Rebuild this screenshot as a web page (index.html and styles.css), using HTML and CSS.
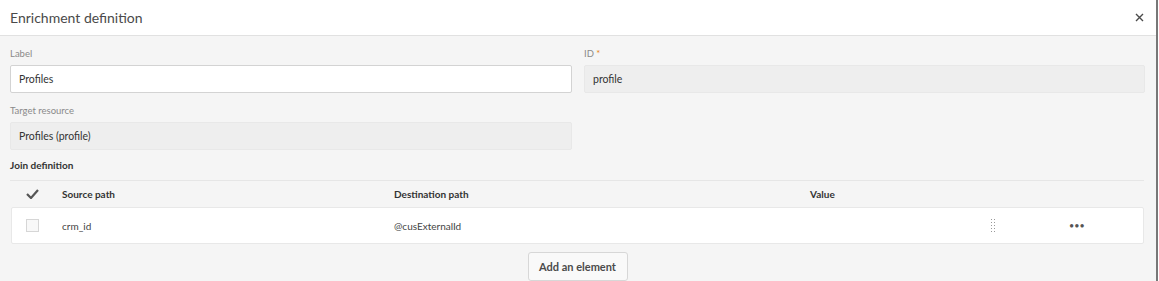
FILE: index.html
```html
<!DOCTYPE html>
<html lang="en">
<head>
  <meta charset="UTF-8" />
  <title>Enrichment definition</title>
  <link rel="stylesheet" href="styles.css">
</head>
<body>
  <div class="dialog">
    <header>
      <h1>Enrichment definition</h1>
      <svg class="close" width="9" height="9" viewBox="0 0 9 9"><path d="M1 1 L8 8 M8 1 L1 8" stroke="#4b4b4b" stroke-width="1.4"/></svg>
    </header>

    <div class="content">
      <div class="fields">
        <div class="field">
          <label>Label</label>
          <div class="input">Profiles</div>
        </div>
        <div class="field">
          <label>ID <span class="req">*</span></label>
          <div class="input readonly">profile</div>
        </div>
        <div class="field">
          <label>Target resource</label>
          <div class="input readonly">Profiles (profile)</div>
        </div>
      </div>

      <h3>Join definition</h3>

      <div class="table">
        <div class="thead">
          <div class="cell check">
            <svg width="13" height="10" viewBox="0 0 13 10"><path d="M1 5 L5 9 L12 1" fill="none" stroke="#555" stroke-width="2.2"/></svg>
          </div>
          <div class="cell">Source path</div>
          <div class="cell">Destination path</div>
          <div class="cell">Value</div>
        </div>
        <div class="row">
          <div class="cell check"><span class="box"></span></div>
          <div class="cell">crm_id</div>
          <div class="cell">@cusExternalId</div>
          <div class="cell"></div>
          <div class="cell handle">
            <svg width="6" height="14" viewBox="0 0 6 14">
              <g fill="#999">
                <rect x="0" y="0" width="1" height="1"/><rect x="3" y="0" width="1" height="1"/>
                <rect x="0" y="3" width="1" height="1"/><rect x="3" y="3" width="1" height="1"/>
                <rect x="0" y="6" width="1" height="1"/><rect x="3" y="6" width="1" height="1"/>
                <rect x="0" y="9" width="1" height="1"/><rect x="3" y="9" width="1" height="1"/>
                <rect x="0" y="12" width="1" height="1"/><rect x="3" y="12" width="1" height="1"/>
              </g>
            </svg>
          </div>
          <div class="cell more">&bull;&bull;&bull;</div>
        </div>
      </div>

      <div class="actions">
        <button>Add an element</button>
      </div>
    </div>
  </div>
</body>
</html>
```

FILE: styles.css
```css
* {
  box-sizing: border-box;
}

body {
  margin: 0;
  font-family: Lato, sans-serif;
  background-color: #fff;
  color: #4b4b4b;
}

.dialog {
  width: 1158px;
  height: 281px;
  border-right: 2px solid #777;
  overflow: hidden;
  background-color: #f5f5f5;
}

header {
  display: flex;
  align-items: center;
  justify-content: space-between;
  height: 36px;
  padding: 0 12px 0 10px;
  background-color: #fff;
  border-bottom: 1px solid #e1e1e1;
}

header h1 {
  margin: 0;
  font-size: 14px;
  font-weight: 400;
  color: #4a4a4a;
}

.close {
  margin-bottom: 1px;
}

.content {
  padding: 11px 12px 0 10px;
}

.fields {
  display: grid;
  grid-template-columns: 562px 561px;
  column-gap: 12px;
  row-gap: 11px;
}

.field label {
  display: block;
  font-size: 9.5px;
  line-height: 14px;
  color: #8a8a8a;
  margin-bottom: 4px;
}

.req {
  color: #e68619;
}

.input {
  height: 28px;
  line-height: 26px;
  padding: 0 8px;
  font-size: 10.5px;
  color: #333;
  background-color: #fff;
  border: 1px solid #d3d3d3;
  border-radius: 2px;
}

.input.readonly {
  background-color: #eee;
  border-color: #e8e8e8;
}

h3 {
  margin: 8px 0 0;
  font-size: 10px;
  line-height: 14px;
  font-weight: bold;
  color: #333;
}

.table {
  margin-top: 8px;
  border-top: 1px solid #e6e6e6;
}

.thead,
.row {
  display: grid;
  align-items: center;
  font-size: 10px;
}

.thead {
  grid-template-columns: 52px 332px 416px 1fr;
  height: 26px;
  font-weight: bold;
  color: #333;
}

.row {
  grid-template-columns: 50px 332px 416px 181px 78px 1fr;
  height: 37px;
  margin-left: 1px;
  background-color: #fff;
  border: 1px solid #e8e8e8;
  border-radius: 2px;
  color: #444;
}

.check {
  display: flex;
  padding-left: 16px;
}

.row .check {
  padding-left: 14px;
}

.box {
  width: 13px;
  height: 13px;
  border: 1px solid #d6d6d6;
  background-color: #f8f8f8;
}

.handle {
  padding-top: 3px;
}

.more {
  font-size: 9px;
  color: #555;
}

.actions {
  display: flex;
  justify-content: center;
  padding: 8px 0 0 1px;
}

.actions button {
  width: 100px;
  height: 29px;
  font-family: inherit;
  font-size: 11px;
  font-weight: bold;
  color: #4b4b4b;
  background-color: #f9f9f9;
  border: 1px solid #d7d7d7;
  border-radius: 3px;
}
```
